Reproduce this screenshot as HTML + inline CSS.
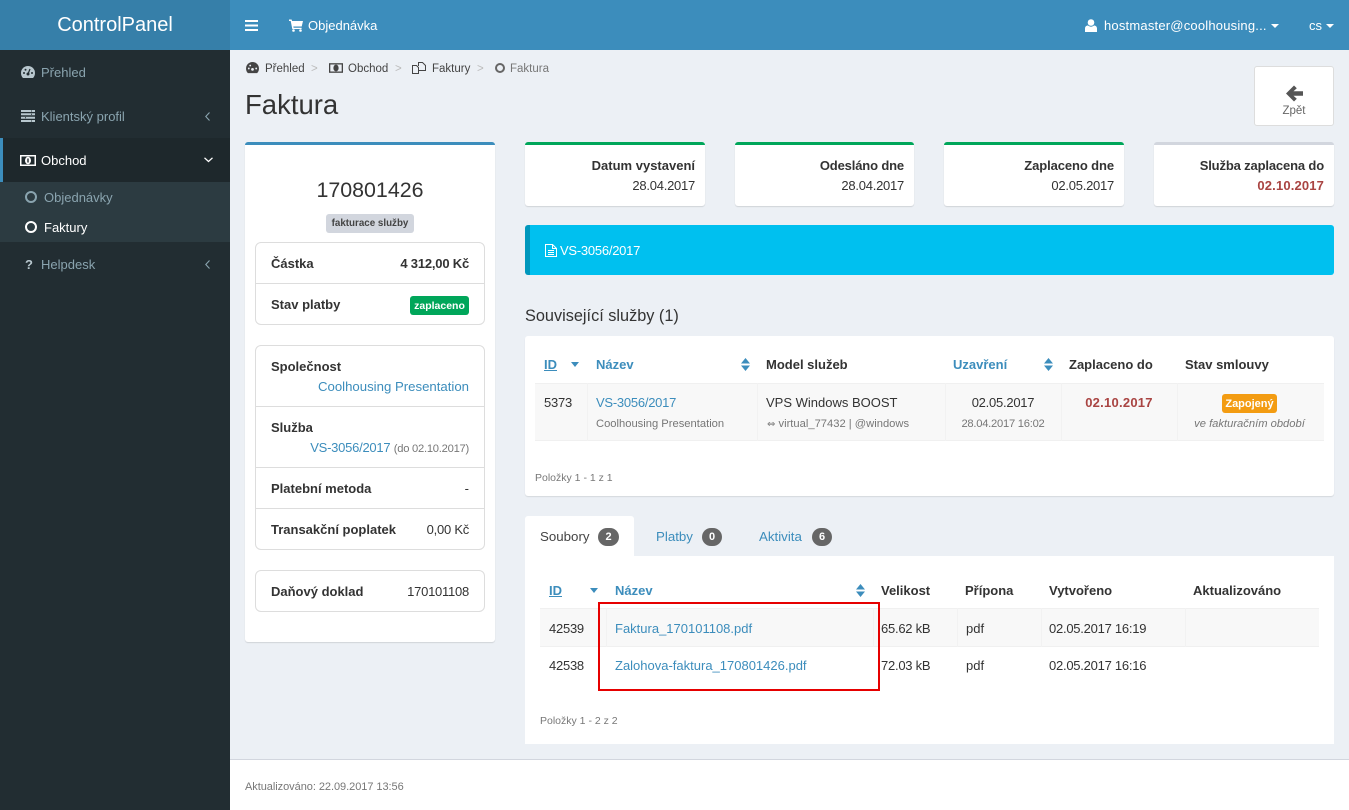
<!DOCTYPE html>
<html lang="cs">
<head>
<meta charset="utf-8">
<title>Faktura</title>
<style>
html,body{margin:0;padding:0}
body{width:1349px;height:810px;position:relative;overflow:hidden;background:#ecf0f5;font-family:"Liberation Sans",sans-serif;font-size:13px;color:#333}
div,span,a,svg{position:absolute}
.t{white-space:nowrap;line-height:24px;height:24px}
b.t,.b{font-weight:bold;position:absolute}
a{color:#3c8dbc;text-decoration:none}
.s{font-size:11.2px;color:#777}
.n{letter-spacing:-.25px}
.bc{font-size:11.5px;color:#444}
.bx{background:#fff;border:1px solid #ddd;border-radius:6px;box-sizing:border-box}
.ln{height:1px;background:#ddd}
.tile{background:#fff;border-top:3px solid #00a65a;border-radius:3px;box-shadow:0 1px 1px rgba(0,0,0,.12);top:142px;height:61px;width:180px}
.side{color:#8aa4af}
.lab{border-radius:3px;font-weight:bold;font-size:10.5px;text-align:center;line-height:20px;height:19px}
.badge{background:#666;color:#fff;border-radius:10px;font-weight:bold;font-size:11px;text-align:center;height:18px;line-height:18px;top:528px}
.v{width:1px;background:#f2f2f2}
.sort{width:9px;height:13px}
</style>
</head>
<body>
<!-- header -->
<div style="left:0;top:0;width:230px;height:50px;background:#367fa9"></div>
<div style="left:230px;top:0;width:1119px;height:50px;background:#3c8dbc"></div>
<span class="t" style="left:0;width:230px;text-align:center;top:15px;color:#fff;font-size:20px;line-height:20px">ControlPanel</span>
<svg style="left:245px;top:20px" width="13" height="11" viewBox="0 0 13 11"><path d="M0 1h13M0 5.500h13M0 10h13" stroke="#fff" stroke-width="2"/></svg>
<svg style="left:289px;top:19px" width="14" height="13" viewBox="0 0 14 13"><path d="M0 .5h2.600l.5 1.500H14l-1.300 5.500H4.300l.3 1.300h8V10H3.300L1.700 2H0z" fill="#fff"/><circle cx="4.500" cy="11.500" r="1.300" fill="#fff"/><circle cx="11.500" cy="11.500" r="1.300" fill="#fff"/></svg>
<span class="t" style="left:308px;top:14px;color:#fff">Objednávka</span>
<svg style="left:1085px;top:19px" width="12" height="13" viewBox="0 0 12 13"><circle cx="6" cy="3.500" r="3.300" fill="#fff"/><path d="M0 13V9.500C0 7.500 1.500 6.500 3 6.500c1 .8 2 1.200 3 1.200s2-.4 3-1.200c1.500 0 3 1 3 3V13z" fill="#fff"/></svg>
<span class="t" style="left:1104px;top:14px;color:#fff;letter-spacing:.2px">hostmaster@coolhousing...</span>
<svg style="left:1271px;top:24px" width="8" height="4" viewBox="0 0 8 4"><path d="M0 0h8L4 4z" fill="#fff"/></svg>
<span class="t" style="left:1309px;top:14px;color:#fff">cs</span>
<svg style="left:1326px;top:24px" width="8" height="4" viewBox="0 0 8 4"><path d="M0 0h8L4 4z" fill="#fff"/></svg>

<!-- sidebar -->
<div style="left:0;top:50px;width:230px;height:760px;background:#222d32"></div>
<div style="left:0;top:138px;width:230px;height:44px;background:#1e282c"></div>
<div style="left:0;top:138px;width:3px;height:44px;background:#3c8dbc"></div>
<div style="left:0;top:182px;width:230px;height:60px;background:#2c3b41"></div>
<svg style="left:21px;top:66px" width="14" height="13" viewBox="0 0 14 13"><path d="M7 0a7 7 0 0 0-7 7c0 2 .7 3.800 2 5h10c1.300-1.200 2-3 2-5a7 7 0 0 0-7-7z" fill="#b8c7ce"/><circle cx="7" cy="8" r="1.500" fill="#222d32"/><path d="M7 8l2-5" stroke="#222d32" stroke-width="1.200"/><circle cx="3" cy="7" r="1" fill="#222d32"/><circle cx="4.500" cy="3.800" r="1" fill="#222d32"/><circle cx="11" cy="7" r="1" fill="#222d32"/></svg>
<span class="t side" style="left:41px;top:61px">Přehled</span>
<svg style="left:21px;top:110px" width="14" height="12" viewBox="0 0 14 12"><path d="M0 1h14M0 4.300h14M0 7.700h14M0 11h14" stroke="#b8c7ce" stroke-width="2"/><path d="M10 1h1M10 4.300h1M4 7.700h1M10 11h1" stroke="#222d32" stroke-width="1"/></svg>
<span class="t side" style="left:41px;top:105px">Klientský profil</span>
<svg style="left:205px;top:112px" width="5" height="9" viewBox="0 0 5 9"><path d="M4.500.5L.8 4.500l3.700 4" fill="none" stroke="#8aa4af" stroke-width="1.100"/></svg>
<svg style="left:20px;top:155px" width="16" height="11" viewBox="0 0 16 11"><rect width="16" height="11" fill="#fff"/><rect x="1.500" y="1.500" width="13" height="8" fill="#1e282c"/><ellipse cx="8" cy="5.500" rx="3" ry="3.800" fill="#fff"/><rect x="7.300" y="3.500" width="1.400" height="4" fill="#1e282c"/></svg>
<span class="t" style="left:41px;top:149px;color:#fff">Obchod</span>
<svg style="left:204px;top:157px" width="9" height="6" viewBox="0 0 9 6"><path d="M.5.800l4 3.700 4-3.700" fill="none" stroke="#fff" stroke-width="1.300"/></svg>
<div style="left:25px;top:191px;width:12px;height:12px;box-sizing:border-box;border:2px solid #8aa4af;border-radius:50%"></div>
<span class="t side" style="left:44px;top:186px">Objednávky</span>
<div style="left:25px;top:221px;width:12px;height:12px;box-sizing:border-box;border:2px solid #fff;border-radius:50%"></div>
<span class="t" style="left:44px;top:216px;color:#fff">Faktury</span>
<span class="t" style="left:25px;top:253px;color:#b8c7ce;font-weight:bold">?</span>
<span class="t side" style="left:41px;top:253px">Helpdesk</span>
<svg style="left:205px;top:260px" width="5" height="9" viewBox="0 0 5 9"><path d="M4.500.5L.8 4.500l3.700 4" fill="none" stroke="#8aa4af" stroke-width="1.100"/></svg>

<!-- breadcrumb -->
<svg style="left:246px;top:62px" width="13" height="12" viewBox="0 0 14 13"><path d="M7 0a7 7 0 0 0-7 7c0 2 .7 3.800 2 5h10c1.300-1.200 2-3 2-5a7 7 0 0 0-7-7z" fill="#444"/><circle cx="7" cy="8" r="1.500" fill="#ecf0f5"/><circle cx="3" cy="7" r="1" fill="#ecf0f5"/><circle cx="4.500" cy="3.800" r="1" fill="#ecf0f5"/><circle cx="11" cy="7" r="1" fill="#ecf0f5"/></svg>
<span class="t bc" style="left:265px;top:57px">Přehled</span>
<span class="t bc" style="left:311px;top:57px;color:#bbb">&gt;</span>
<svg style="left:329px;top:63px" width="14" height="10" viewBox="0 0 16 11"><rect width="16" height="11" fill="#444"/><rect x="1.500" y="1.500" width="13" height="8" fill="#ecf0f5"/><ellipse cx="8" cy="5.500" rx="3" ry="3.800" fill="#444"/></svg>
<span class="t bc" style="left:348px;top:57px">Obchod</span>
<span class="t bc" style="left:395px;top:57px;color:#bbb">&gt;</span>
<svg style="left:412px;top:62px" width="14" height="12" viewBox="0 0 14 12"><path d="M.5 3.500h4l2 2v6h-6zM6.500 4V.5h4l3 3v5h-7" fill="none" stroke="#444"/></svg>
<span class="t bc" style="left:432px;top:57px">Faktury</span>
<span class="t bc" style="left:477px;top:57px;color:#bbb">&gt;</span>
<div style="left:495px;top:63px;width:10px;height:10px;box-sizing:border-box;border:2px solid #666;border-radius:50%"></div>
<span class="t bc" style="left:510px;top:57px;color:#777">Faktura</span>
<span class="t" style="left:245px;top:91px;font-size:27.500px;line-height:28px;height:28px;color:#333">Faktura</span>

<!-- back button -->
<div style="left:1254px;top:66px;width:80px;height:60px;box-sizing:border-box;background:#fff;border:1px solid #ddd;border-radius:3px"></div>
<svg style="left:1286px;top:85px" width="17" height="17" viewBox="0 0 17 17"><path d="M0 8.500L8 .5l2.800 2.800L7.500 6.300H17v4.400H7.500l3.300 3L8 16.500z" fill="#555"/></svg>
<span class="t" style="left:1254px;width:80px;text-align:center;top:99px;font-size:11.500px;color:#666">Zpět</span>

<!-- left box -->
<div style="left:245px;top:142px;width:250px;height:500px;box-sizing:border-box;background:#fff;border-top:3px solid #3c8dbc;border-radius:3px;box-shadow:0 1px 1px rgba(0,0,0,.12)"></div>
<span class="t" style="left:245px;width:250px;text-align:center;top:178px;font-size:21.400px">170801426</span>
<div class="lab" style="left:326px;top:214px;width:88px;background:#d2d6de;color:#444;font-size:9.800px">fakturace služby</div>

<div class="bx" style="left:255px;top:242px;width:230px;height:83px"></div>
<div class="ln" style="left:256px;top:283px;width:228px"></div>
<span class="t b" style="left:271px;top:252px">Částka</span>
<span class="t b" style="right:880px;top:252px;letter-spacing:-.2px">4 312,00 Kč</span>
<span class="t b" style="left:271px;top:293px">Stav platby</span>
<div class="lab" style="left:410px;top:296px;width:59px;background:#00a65a;color:#fff">zaplaceno</div>

<div class="bx" style="left:255px;top:345px;width:230px;height:205px"></div>
<div class="ln" style="left:256px;top:406px;width:228px"></div>
<div class="ln" style="left:256px;top:467px;width:228px"></div>
<div class="ln" style="left:256px;top:508px;width:228px"></div>
<span class="t b" style="left:271px;top:355px">Společnost</span>
<a class="t" style="right:880px;top:375px;font-size:13.200px">Coolhousing Presentation</a>
<span class="t b" style="left:271px;top:416px">Služba</span>
<span class="t n" style="right:880px;top:436px"><a style="position:static">VS-3056/2017</a> <span class="s" style="position:static">(do 02.10.2017)</span></span>
<span class="t b" style="left:271px;top:477px">Platební metoda</span>
<span class="t" style="right:880px;top:477px">-</span>
<span class="t b" style="left:271px;top:518px">Transakční poplatek</span>
<span class="t n" style="right:880px;top:518px">0,00 Kč</span>

<div class="bx" style="left:255px;top:570px;width:230px;height:42px"></div>
<span class="t b" style="left:271px;top:580px">Daňový doklad</span>
<span class="t n" style="right:880px;top:580px">170101108</span>

<!-- tiles -->
<div class="tile" style="left:525px"></div>
<div class="tile" style="left:735px;width:179px"></div>
<div class="tile" style="left:944px"></div>
<div class="tile" style="left:1154px;border-top-color:#d2d6de"></div>
<span class="t b" style="right:654px;top:154px">Datum vystavení</span>
<span class="t n" style="right:654px;top:174px">28.04.2017</span>
<span class="t b" style="right:445px;top:154px;letter-spacing:-.15px">Odesláno dne</span>
<span class="t n" style="right:445px;top:174px">28.04.2017</span>
<span class="t b" style="right:235px;top:154px;letter-spacing:-.1px">Zaplaceno dne</span>
<span class="t n" style="right:235px;top:174px">02.05.2017</span>
<span class="t b" style="right:25px;top:154px;letter-spacing:-.15px">Služba zaplacena do</span>
<span class="t b" style="right:25px;top:174px;color:#a94442;letter-spacing:.15px">02.10.2017</span>

<!-- callout -->
<div style="left:525px;top:225px;width:809px;height:50px;box-sizing:border-box;background:#00c0ef;border-left:5px solid #0097bc;border-radius:3px"></div>
<svg style="left:545px;top:244px" width="12" height="13" viewBox="0 0 12 13"><path d="M.5.500h7l4 4v8H.500zM7.500.500v4h4M3 6.500h6M3 8.500h6M3 10.500h6" fill="none" stroke="#fff"/></svg>
<span class="t n" style="left:560px;top:239px;color:#fff">VS-3056/2017</span>

<!-- related services -->
<span class="t" style="left:525px;top:304px;font-size:16.300px">Související služby (1)</span>
<div style="left:525px;top:336px;width:809px;height:160px;background:#fff;border-radius:3px;box-shadow:0 1px 1px rgba(0,0,0,.1)"></div>
<div style="left:535px;top:383px;width:789px;height:58px;background:#f8f8f8;border-top:1px solid #f0f0f0;border-bottom:1px solid #f0f0f0;box-sizing:border-box"></div>
<div class="v" style="left:587px;top:383px;height:58px"></div>
<div class="v" style="left:757px;top:383px;height:58px"></div>
<div class="v" style="left:945px;top:383px;height:58px"></div>
<div class="v" style="left:1061px;top:383px;height:58px"></div>
<div class="v" style="left:1177px;top:383px;height:58px"></div>
<a class="t b" style="left:544px;top:353px;text-decoration:underline">ID</a>
<svg style="left:571px;top:362px" width="8" height="5" viewBox="0 0 8 5"><path d="M0 0h8L4 5z" fill="#3c8dbc"/></svg>
<a class="t b" style="left:596px;top:353px">Název</a>
<svg class="sort" style="left:741px;top:358px" viewBox="0 0 9 13"><path d="M0 5.500L4.500 0 9 5.500zM0 7.500h9L4.500 13z" fill="#3c8dbc"/></svg>
<span class="t b" style="left:766px;top:353px">Model služeb</span>
<a class="t b" style="left:953px;top:353px">Uzavření</a>
<svg class="sort" style="left:1044px;top:358px" viewBox="0 0 9 13"><path d="M0 5.500L4.500 0 9 5.500zM0 7.500h9L4.500 13z" fill="#3c8dbc"/></svg>
<span class="t b" style="left:1069px;top:353px">Zaplaceno do</span>
<span class="t b" style="left:1185px;top:353px">Stav smlouvy</span>
<span class="t n" style="left:544px;top:391px">5373</span>
<a class="t n" style="left:596px;top:391px">VS-3056/2017</a>
<span class="t s" style="left:596px;top:412px">Coolhousing Presentation</span>
<span class="t" style="left:766px;top:391px">VPS Windows BOOST</span>
<span class="t s" style="left:767px;top:412px"><span style="position:static;font-family:'DejaVu Sans',sans-serif;font-size:10px">⇔</span> virtual_77432 | @windows</span>
<span class="t n" style="left:945px;width:116px;text-align:center;top:391px">02.05.2017</span>
<span class="t s n" style="left:945px;width:116px;text-align:center;top:412px">28.04.2017 16:02</span>
<span class="t b" style="left:1061px;width:116px;text-align:center;top:391px;color:#a94442;letter-spacing:.25px">02.10.2017</span>
<div class="lab" style="left:1222px;top:394px;width:55px;background:#f39c12;color:#fff;font-size:11px">Zapojený</div>
<span class="t s" style="left:1177px;width:145px;text-align:center;top:412px;font-style:italic">ve fakturačním období</span>
<span class="t" style="left:535px;top:466px;font-size:10.500px;color:#777">Položky 1 - 1 z 1</span>

<!-- tabs -->
<div style="left:525px;top:516px;width:109px;height:40px;background:#fff;border-radius:3px 3px 0 0"></div>
<div style="left:525px;top:556px;width:809px;height:188px;background:#fff"></div>
<span class="t" style="left:540px;top:525px;color:#444;font-size:13.300px">Soubory</span>
<div class="badge" style="left:598px;width:21px">2</div>
<a class="t" style="left:656px;top:525px;font-size:13.300px">Platby</a>
<div class="badge" style="left:702px;width:20px">0</div>
<a class="t" style="left:759px;top:525px;font-size:13.300px">Aktivita</a>
<div class="badge" style="left:812px;width:20px">6</div>

<div style="left:540px;top:608px;width:779px;height:39px;background:#f8f8f8;border-top:1px solid #f0f0f0;border-bottom:1px solid #f0f0f0;box-sizing:border-box"></div>
<div class="v" style="left:606px;top:608px;height:39px"></div>
<div class="v" style="left:873px;top:608px;height:39px"></div>
<div class="v" style="left:957px;top:608px;height:39px"></div>
<div class="v" style="left:1041px;top:608px;height:39px"></div>
<div class="v" style="left:1185px;top:608px;height:39px"></div>
<a class="t b" style="left:549px;top:579px;text-decoration:underline">ID</a>
<svg style="left:590px;top:588px" width="8" height="5" viewBox="0 0 8 5"><path d="M0 0h8L4 5z" fill="#3c8dbc"/></svg>
<a class="t b" style="left:615px;top:579px">Název</a>
<svg class="sort" style="left:856px;top:584px" viewBox="0 0 9 13"><path d="M0 5.500L4.500 0 9 5.500zM0 7.500h9L4.500 13z" fill="#3c8dbc"/></svg>
<span class="t b" style="left:881px;top:579px">Velikost</span>
<span class="t b" style="left:965px;top:579px">Přípona</span>
<span class="t b" style="left:1049px;top:579px">Vytvořeno</span>
<span class="t b" style="left:1193px;top:579px">Aktualizováno</span>
<span class="t n" style="left:549px;top:617px">42539</span>
<a class="t" style="left:615px;top:617px">Faktura_170101108.pdf</a>
<span class="t n" style="left:881px;top:617px">65.62 kB</span>
<span class="t" style="left:966px;top:617px">pdf</span>
<span class="t n" style="left:1049px;top:617px">02.05.2017 16:19</span>
<span class="t n" style="left:549px;top:654px">42538</span>
<a class="t" style="left:615px;top:654px">Zalohova-faktura_170801426.pdf</a>
<span class="t n" style="left:881px;top:654px">72.03 kB</span>
<span class="t" style="left:966px;top:654px">pdf</span>
<span class="t n" style="left:1049px;top:654px">02.05.2017 16:16</span>
<span class="t" style="left:540px;top:709px;font-size:10.500px;color:#777">Položky 1 - 2 z 2</span>

<div style="left:598px;top:602px;width:282px;height:89px;box-sizing:border-box;border:2px solid #e60000"></div>

<!-- footer -->
<div style="left:230px;top:759px;width:1119px;height:51px;box-sizing:border-box;background:#fff;border-top:1px solid #d2d6de"></div>
<span class="t" style="left:245px;top:775px;font-size:11px;letter-spacing:-.05px;color:#777">Aktualizováno: 22.09.2017 13:56</span>
</body>
</html>
